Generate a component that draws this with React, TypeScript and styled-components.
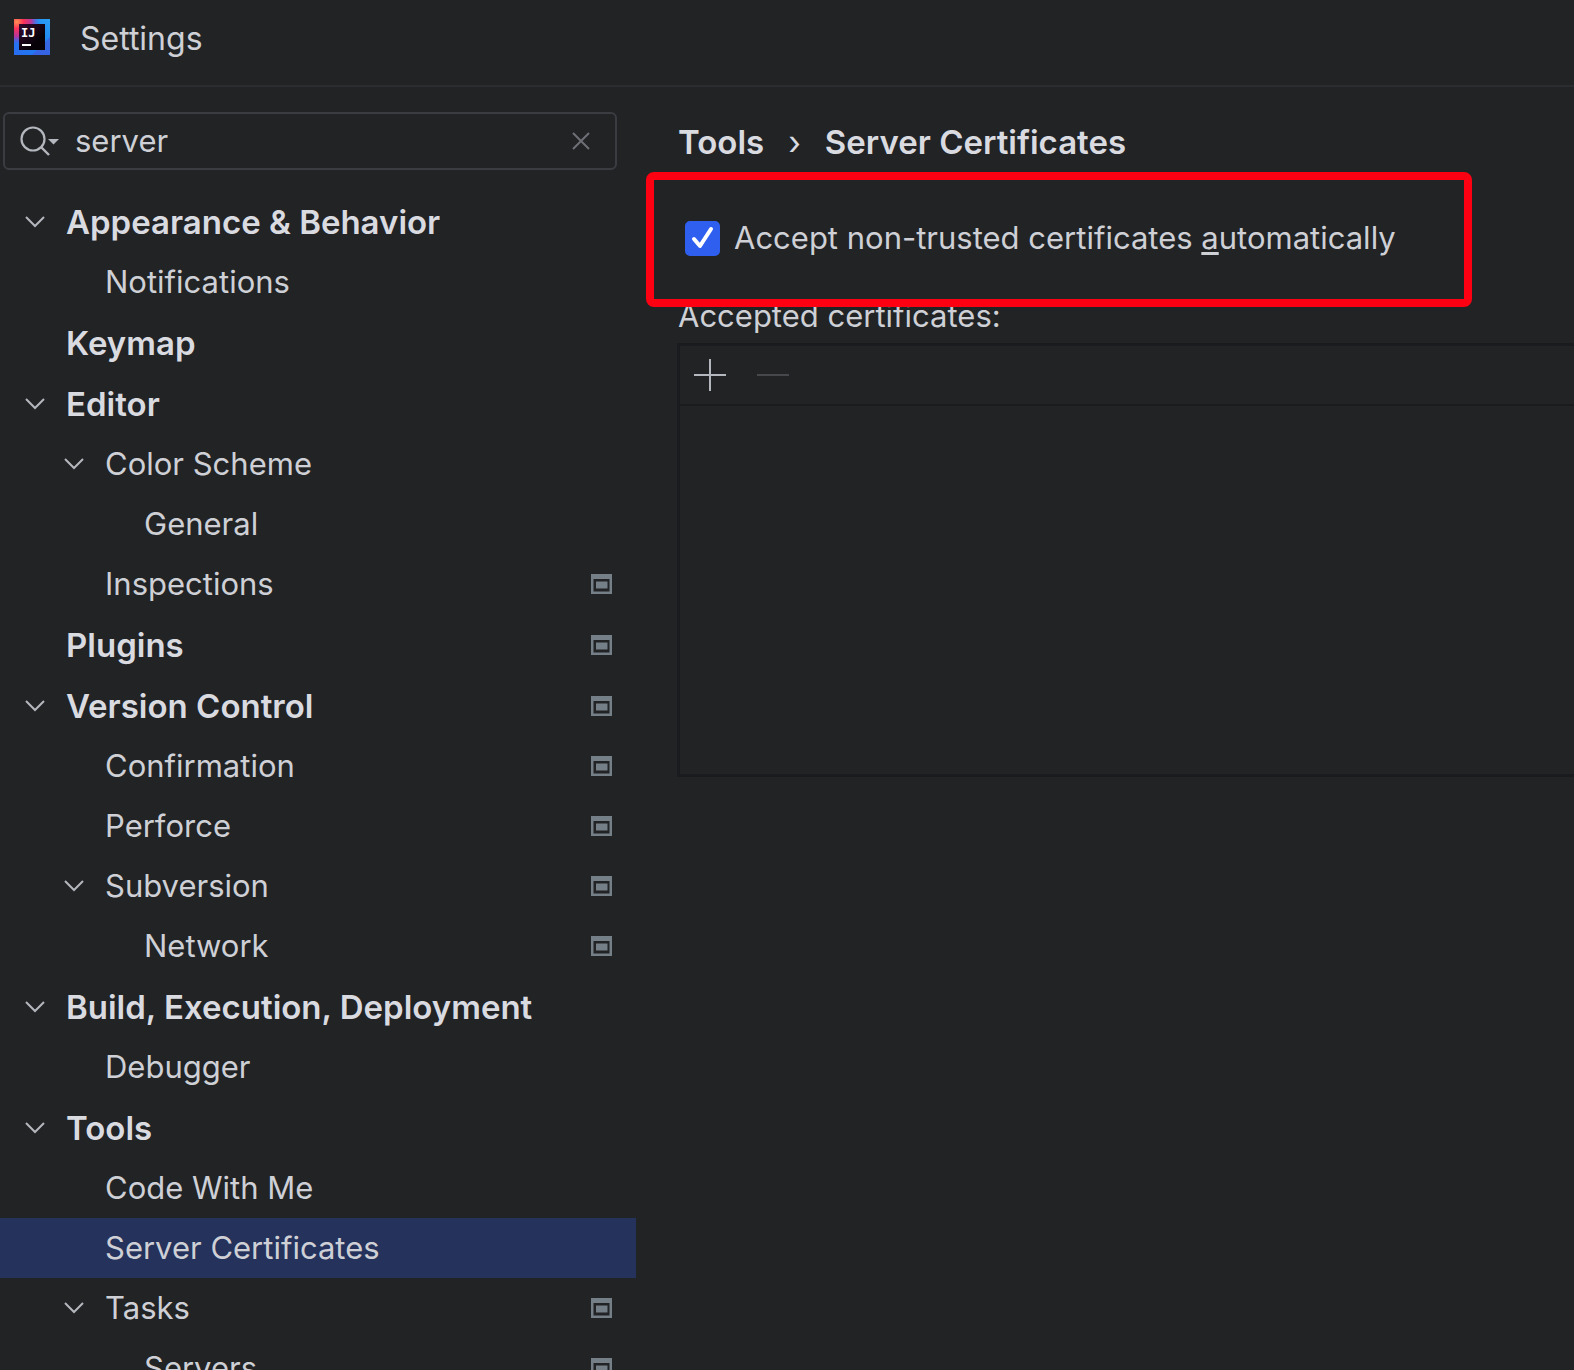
import React, { useState } from "react";
import styled, { createGlobalStyle } from "styled-components";

const colors = {
  bg: "#212325",
  line: "#2a2c2f",
  field: "#3a3c41",
  text: "#ced0d6",
  strong: "#d9dbe0",
  icon: "#b4b7bd",
  muted: "#6d7076",
  disabled: "#46484b",
  panelLine: "#1a1b1e",
  selected: "#25325b",
  accent: "#2f5fee",
  marker: "#747f87",
  highlight: "#fd0011",
};

const GlobalStyle = createGlobalStyle`
  * { box-sizing: border-box; }
  body {
    margin: 0;
    background: ${colors.bg};
    color: ${colors.text};
    font-family: Inter, "Liberation Sans", sans-serif;
    font-size: 31px;
    line-height: 40px;
  }
  button, input { font: inherit; color: inherit; }
  a { color: inherit; text-decoration: none; }
`;

const Window = styled.div`
  display: flex;
  flex-direction: column;
  height: 100vh;
  overflow: hidden;
`;

const TitleBar = styled.header`
  display: flex;
  flex: none;
  align-items: center;
  gap: 30px;
  height: 87px;
  padding: 0 14px 12px;
  border-bottom: 2px solid ${colors.line};
`;

const Title = styled.h1`
  margin: 0;
  padding-top: 4px;
  font-size: 32px;
  font-weight: 400;
`;

const Body = styled.div`
  display: flex;
  flex: 1;
  min-height: 0;
`;

const Sidebar = styled.aside`
  display: flex;
  flex: none;
  flex-direction: column;
  gap: 22px;
  width: 636px;
  padding-top: 25px;
  overflow: hidden;
`;

const SearchField = styled.label`
  display: flex;
  flex: none;
  align-items: center;
  gap: 16px;
  height: 58px;
  margin: 0 19px 0 3px;
  padding: 0 14px;
  border: 2px solid ${colors.field};
  border-radius: 6px;
`;

const SearchInput = styled.input`
  flex: 1;
  min-width: 0;
  padding: 0;
  border: 0;
  outline: 0;
  background: none;
`;

const IconButton = styled.button`
  display: flex;
  flex: none;
  align-items: center;
  justify-content: center;
  width: 40px;
  height: 40px;
  padding: 0;
  border: 0;
  background: none;
`;

const Tree = styled.ul`
  display: flex;
  flex-direction: column;
  gap: 1px;
  margin: 0;
  padding: 0;
  list-style: none;
`;

const Branch = styled.ul`
  margin: 0;
  padding: 0;
  list-style: none;
`;

const Row = styled.div<{ $level: number; $selected?: boolean }>`
  display: flex;
  align-items: center;
  height: 60px;
  padding-left: ${(p) => 15 + p.$level * 39}px;
  padding-right: 24px;
  background: ${(p) => (p.$selected ? colors.selected : "none")};
`;

const RowToggle = styled(IconButton)`
  margin-right: 11px;
`;

const ToggleSpace = styled.span`
  flex: none;
  width: 51px;
`;

const RowLink = styled.a<{ $strong: boolean }>`
  flex: 1;
  white-space: nowrap;
  color: ${(p) => (p.$strong ? colors.strong : colors.text)};
  font-size: ${(p) => (p.$strong ? 33 : 31)}px;
  font-weight: ${(p) => (p.$strong ? 600 : 400)};
`;

const Content = styled.main`
  flex: 1;
  min-width: 0;
  padding: 35px 0 0 41px;
`;

const Breadcrumbs = styled.nav`
  display: flex;
  gap: 24px;
  padding-left: 1px;
  color: ${colors.strong};
  font-size: 33px;
  font-weight: 600;
`;

const Separator = styled.span`
  font-weight: 400;
`;

const CheckRow = styled.div`
  position: relative;
  display: flex;
  width: fit-content;
  margin: 56px 0 38px;
  padding-left: 8px;
`;

const HighlightFrame = styled.div`
  position: absolute;
  inset: -46px -76px -49px -31px;
  border: 8px solid ${colors.highlight};
  border-radius: 8px;
  pointer-events: none;
`;

const CheckLabel = styled.label`
  display: flex;
  align-items: center;
  gap: 14px;
  white-space: nowrap;
`;

const CheckBox = styled.span`
  display: grid;
  width: 35px;
  height: 35px;

  > * { grid-area: 1 / 1; }
`;

const CheckInput = styled.input`
  width: 35px;
  height: 35px;
  margin: 0;
  appearance: none;
  border: 2px solid ${colors.muted};
  border-radius: 5px;

  &:checked {
    border-color: ${colors.accent};
    background: ${colors.accent};
  }
  &:not(:checked) + svg { display: none; }
`;

const Mnemonic = styled.span`
  text-decoration: underline;
  text-decoration-thickness: 3px;
  text-underline-offset: 3px;
`;

const PanelTitle = styled.h2`
  margin: 0;
  padding: 0 0 7px 1px;
  font-size: 31px;
  font-weight: 400;
`;

const Panel = styled.section`
  border: 3px solid ${colors.panelLine};
  border-right: 0;
`;

const PanelTools = styled.div`
  display: flex;
  align-items: center;
  gap: 23px;
  height: 60px;
  padding-left: 10px;
  border-bottom: 2px solid ${colors.panelLine};
`;

const PanelBody = styled.div`
  height: 368px;
`;

const Logo = () => (
  <svg width="36" height="36" viewBox="0 0 36 36" aria-hidden="true">
    <defs>
      <linearGradient id="frame" x1="0" y1="1" x2="1" y2="0">
        <stop offset="0" stopColor="#2a6cf0" />
        <stop offset="0.5" stopColor="#1c7df2" />
        <stop offset="1" stopColor="#2ba0f5" />
      </linearGradient>
      <radialGradient id="flare" cx="0.08" cy="0.08" r="0.62">
        <stop offset="0" stopColor="#ff9152" />
        <stop offset="0.3" stopColor="#ff3158" />
        <stop offset="0.65" stopColor="#d12a8c" stopOpacity="0.85" />
        <stop offset="1" stopColor="#6a4ce8" stopOpacity="0" />
      </radialGradient>
      <linearGradient id="core" x1="0" y1="0" x2="1" y2="1">
        <stop offset="0" stopColor="#35092f" />
        <stop offset="0.7" stopColor="#060208" />
      </linearGradient>
    </defs>
    <rect width="36" height="36" fill="url(#frame)" />
    <path d="M36 18v18H18z" fill="#4653d8" opacity="0.6" />
    <rect width="36" height="36" fill="url(#flare)" />
    <rect x="5" y="5" width="26" height="26" fill="url(#core)" />
    <text x="7" y="18" fill="#fff" fontFamily="DejaVu Sans Mono" fontWeight="700" fontSize="12">IJ</text>
    <rect x="8" y="25" width="9" height="2" fill="#fff" />
  </svg>
);

const SearchIcon = () => (
  <svg width="40" height="32" viewBox="0 0 40 32" fill="none" aria-hidden="true">
    <circle cx="14" cy="14" r="11.5" stroke={colors.icon} strokeWidth="2.2" />
    <path d="M22 22l8 8" stroke={colors.icon} strokeWidth="2.4" />
    <path d="M29 14h11l-5.500 5.500z" fill={colors.icon} />
  </svg>
);

const ClearIcon = () => (
  <svg width="18" height="18" viewBox="0 0 18 18" aria-hidden="true">
    <path d="M1 1l16 16M17 1L1 17" stroke={colors.muted} strokeWidth="2" />
  </svg>
);

const Chevron = () => (
  <svg width="20" height="12" viewBox="0 0 20 12" fill="none" aria-hidden="true">
    <path d="M1 1l9 9 9-9" stroke={colors.icon} strokeWidth="2" />
  </svg>
);

const ProjectMarker = () => (
  <svg width="21" height="20" viewBox="0 0 21 20" role="img" aria-label="For current project">
    <path fillRule="evenodd" d="M0 0h21v20H0zM2.500 5v12.500h16V5z" fill={colors.marker} />
    <rect x="5" y="7.500" width="11.500" height="7" fill={colors.marker} />
  </svg>
);

const CheckMark = () => (
  <svg width="35" height="35" viewBox="0 0 35 35" fill="none" aria-hidden="true">
    <path d="M9 18l6 7L26 8" stroke="#fff" strokeWidth="4" strokeLinecap="round" strokeLinejoin="round" />
  </svg>
);

const PlusIcon = () => (
  <svg width="32" height="32" viewBox="0 0 32 32" aria-hidden="true">
    <path d="M16 0v32M0 16h32" stroke={colors.icon} strokeWidth="2" />
  </svg>
);

const MinusIcon = () => (
  <svg width="32" height="32" viewBox="0 0 32 32" aria-hidden="true">
    <path d="M0 16h32" stroke={colors.disabled} strokeWidth="2" />
  </svg>
);

type Item = { name: string; project?: boolean; children?: Item[] };

const items: Item[] = [
  { name: "Appearance & Behavior", children: [{ name: "Notifications" }] },
  { name: "Keymap" },
  {
    name: "Editor",
    children: [
      { name: "Color Scheme", children: [{ name: "General" }] },
      { name: "Inspections", project: true },
    ],
  },
  { name: "Plugins", project: true },
  {
    name: "Version Control",
    project: true,
    children: [
      { name: "Confirmation", project: true },
      { name: "Perforce", project: true },
      { name: "Subversion", project: true, children: [{ name: "Network", project: true }] },
    ],
  },
  { name: "Build, Execution, Deployment", children: [{ name: "Debugger" }] },
  {
    name: "Tools",
    children: [
      { name: "Code With Me" },
      { name: "Server Certificates" },
      { name: "Tasks", project: true, children: [{ name: "Servers", project: true }] },
    ],
  },
];

function TreeItem({ item, level }: { item: Item; level: number }) {
  const [open, setOpen] = useState(true);
  const selected = item.name === "Server Certificates";
  return (
    <li>
      <Row $level={level} $selected={selected}>
        {item.children ? (
          <RowToggle aria-label={`Toggle ${item.name}`} aria-expanded={open} onClick={() => setOpen(!open)}>
            <Chevron />
          </RowToggle>
        ) : (
          <ToggleSpace />
        )}
        <RowLink href="#" $strong={level === 0} aria-current={selected ? "page" : undefined}>
          {item.name}
        </RowLink>
        {item.project && <ProjectMarker />}
      </Row>
      {item.children && open && (
        <Branch>
          {item.children.map((child) => (
            <TreeItem key={child.name} item={child} level={level + 1} />
          ))}
        </Branch>
      )}
    </li>
  );
}

export default function App() {
  const [query, setQuery] = useState("server");
  const [accept, setAccept] = useState(true);
  return (
    <Window>
      <GlobalStyle />
      <TitleBar>
        <Logo />
        <Title>Settings</Title>
      </TitleBar>
      <Body>
        <Sidebar>
          <SearchField>
            <SearchIcon />
            <SearchInput aria-label="Search settings" value={query} onChange={(e) => setQuery(e.target.value)} />
            <IconButton aria-label="Clear search" onClick={() => setQuery("")}>
              <ClearIcon />
            </IconButton>
          </SearchField>
          <Tree>
            {items.map((item) => (
              <TreeItem key={item.name} item={item} level={0} />
            ))}
          </Tree>
        </Sidebar>
        <Content>
          <Breadcrumbs aria-label="Breadcrumb">
            <a href="#">Tools</a>
            <Separator>›</Separator>
            <span>Server Certificates</span>
          </Breadcrumbs>
          <CheckRow>
            <CheckLabel>
              <CheckBox>
                <CheckInput type="checkbox" checked={accept} onChange={(e) => setAccept(e.target.checked)} />
                <CheckMark />
              </CheckBox>
              <span>
                Accept non-trusted certificates <Mnemonic>a</Mnemonic>utomatically
              </span>
            </CheckLabel>
            <HighlightFrame />
          </CheckRow>
          <PanelTitle>Accepted certificates:</PanelTitle>
          <Panel>
            <PanelTools>
              <IconButton aria-label="Add certificate">
                <PlusIcon />
              </IconButton>
              <IconButton aria-label="Remove certificate" disabled>
                <MinusIcon />
              </IconButton>
            </PanelTools>
            <PanelBody />
          </Panel>
        </Content>
      </Body>
    </Window>
  );
}
